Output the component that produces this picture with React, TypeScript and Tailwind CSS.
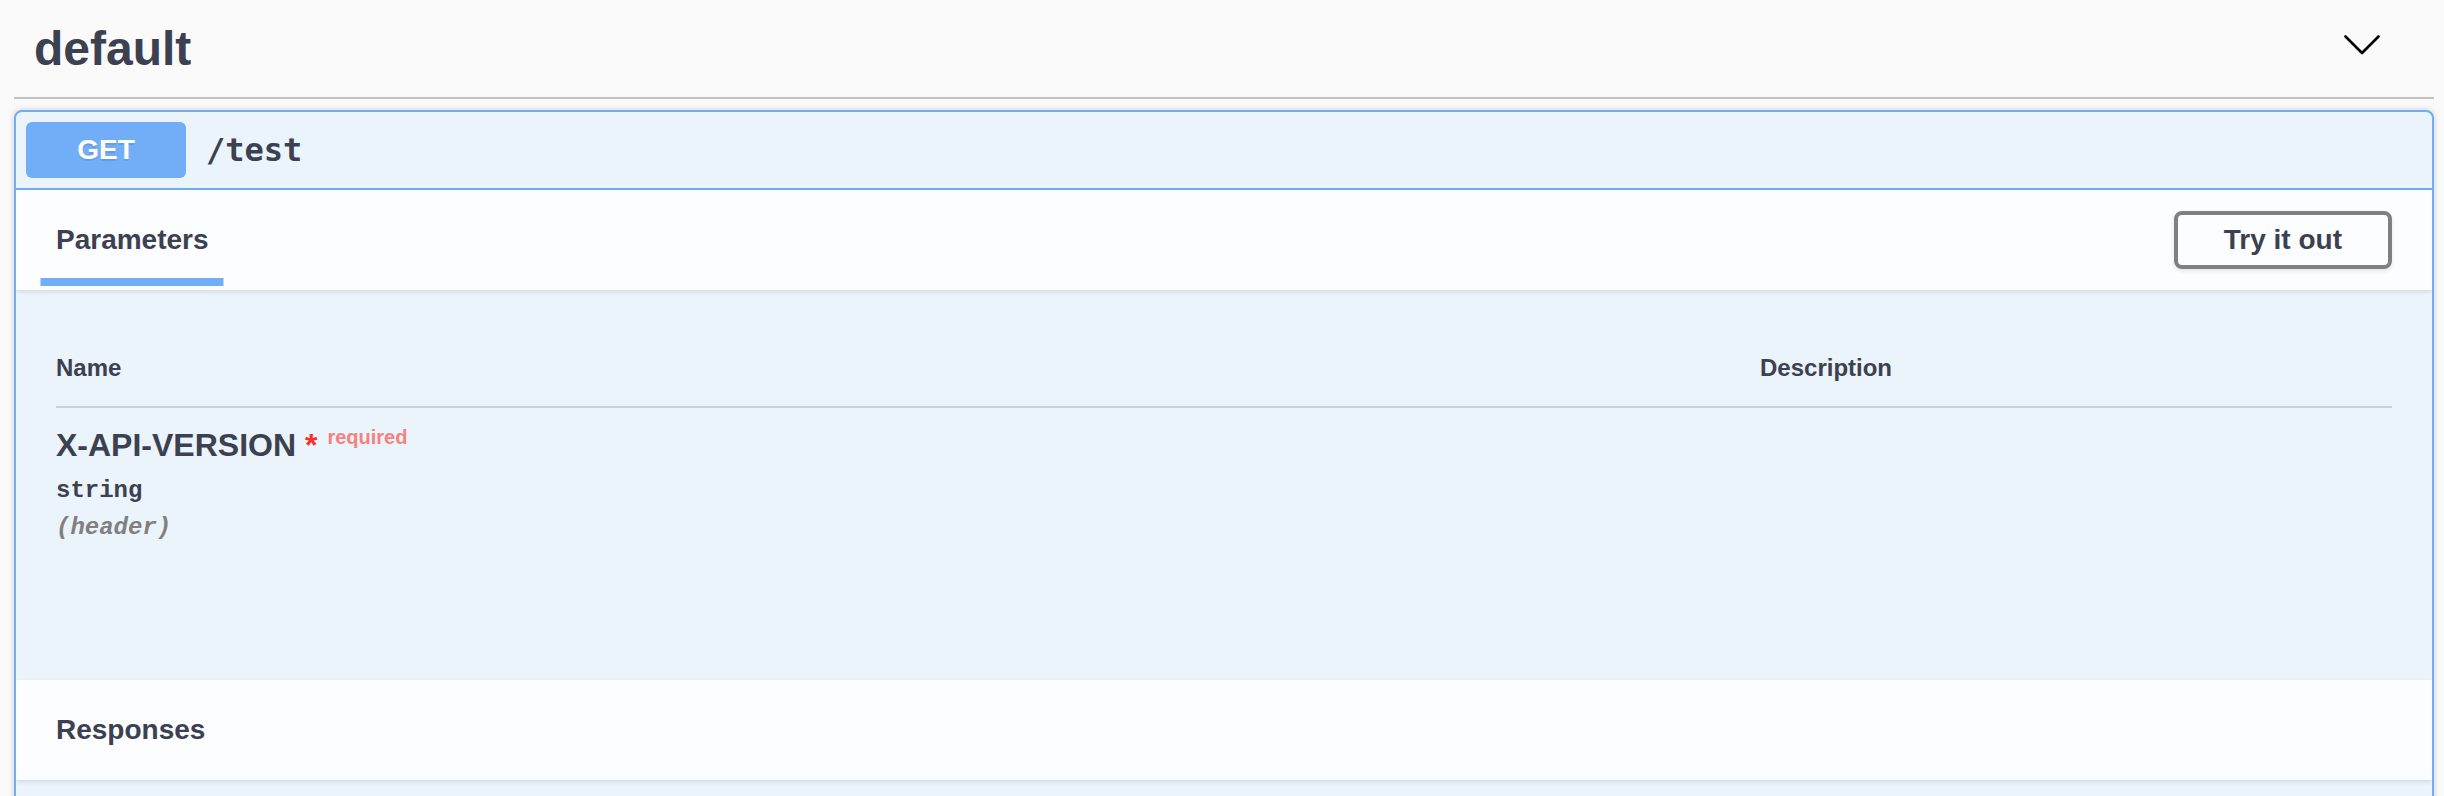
import React from "react";

interface Param {
  name: string;
  type: string;
  location: string;
  required?: boolean;
}

const params: Param[] = [{ name: "X-API-VERSION", type: "string", location: "(header)", required: true }];

const Chevron = () => (
  <svg width="36" height="20" viewBox="0 0 36 20" className="mt-[14px] mr-[14px]">
    <polyline points="1.5,1.5 18,18 34.5,1.5" fill="none" stroke="#000" strokeWidth="2.6" strokeLinecap="round" strokeLinejoin="round" />
  </svg>
);

const App: React.FC = () => {
  return (
    <div className="min-h-screen bg-[#fafafa] pl-[14px] pr-[10px] text-[#3b4151] font-['Liberation_Sans',Arial,sans-serif]">
      {/* Tag header */}
      <div className="flex items-start justify-between border-b-2 border-[#c1c3c7] pl-[20px] pr-[40px] pt-[21px] pb-[20px]">
        <h3 className="text-[48px] leading-[56px] font-bold">default</h3>
        <Chevron />
      </div>

      {/* Operation block */}
      <div className="mt-[11px] rounded-[8px] border-2 border-[#6fadf6] bg-[#ebf3fb] shadow-[0_0_6px_rgba(0,0,0,0.19)] overflow-hidden">
        <div className="flex items-center p-[10px] border-b-2 border-[#6fadf6]">
          <div className="w-[160px] h-[56px] rounded-[6px] bg-[#72aef7] flex items-center justify-center text-white text-[28px] font-bold [text-shadow:0_2px_0_rgba(0,0,0,0.1)]">
            GET
          </div>
          <span className="px-[20px] text-[32px] font-bold font-['DejaVu_Sans_Mono',monospace]">/test</span>
        </div>

        {/* Parameters header */}
        <div className="relative z-10 flex items-center justify-between min-h-[100px] px-[40px] py-[16px] bg-[#fcfdfe] shadow-[0_2px_4px_rgba(0,0,0,0.1)]">
          <span className="relative text-[28px] leading-[32px] font-bold">
            Parameters
            <span className="absolute bottom-[-30px] left-1/2 -translate-x-1/2 w-[120%] h-[8px] bg-[#72aef7]" />
          </span>
          <button className="border-4 border-[#808080] rounded-[8px] px-[46px] py-[9px] text-[28px] leading-[32px] font-bold shadow-[0_2px_4px_rgba(0,0,0,0.1)]">
            Try it out
          </button>
        </div>

        {/* Parameters table */}
        <div className="h-[390px] p-[40px]">
          <table className="w-full border-collapse">
            <thead>
              <tr className="border-b-2 border-[#c8cfd8]">
                <th className="w-[1704px] py-[24px] text-left text-[24px] leading-[28px] font-bold">Name</th>
                <th className="py-[24px] text-left text-[24px] leading-[28px] font-bold">Description</th>
              </tr>
            </thead>
            <tbody>
              {params.map((p, i) => (
                <tr key={i}>
                  <td className="align-top pt-[19px]">
                    <div className="text-[32px] leading-[36px] font-bold">
                      {p.name}
                      {p.required && (
                        <>
                          <span className="text-[#f5302a]">&nbsp;*</span>
                          <span className="relative top-[-12px] px-[10px] text-[20px] text-[#f2837f]">required</span>
                        </>
                      )}
                    </div>
                    <div className="pt-[10px] pb-[10px] text-[24px] leading-[27px] font-bold font-['Liberation_Mono',monospace]">{p.type}</div>
                    <div className="text-[24px] leading-[27px] font-bold italic text-[#808080] font-['Liberation_Mono',monospace]">{p.location}</div>
                  </td>
                  <td className="align-top pt-[19px]"></td>
                </tr>
              ))}
            </tbody>
          </table>
        </div>

        {/* Responses header */}
        <div className="relative z-10 flex items-center h-[100px] px-[40px] bg-[#fcfdfe] shadow-[0_2px_4px_rgba(0,0,0,0.1)]">
          <h4 className="text-[28px] leading-[32px] font-bold">Responses</h4>
        </div>
        <div className="h-[60px]" />
      </div>
    </div>
  );
};

export default App;
